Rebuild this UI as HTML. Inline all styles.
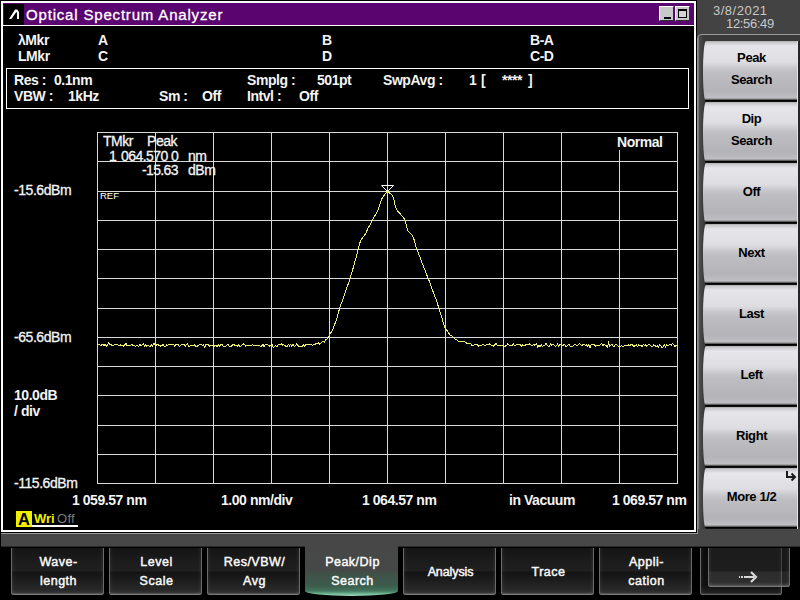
<!DOCTYPE html>
<html><head><meta charset="utf-8">
<style>
*{margin:0;padding:0;box-sizing:border-box}
html,body{width:800px;height:600px;overflow:hidden;background:#000}
body{position:relative;font-family:"Liberation Sans",sans-serif;}
.a{position:absolute;white-space:pre}
.w{color:#f4f4f4;font-size:14px;font-weight:bold;line-height:15px;letter-spacing:-0.45px}
.r{color:#f4f4f4;font-size:14px;line-height:15px;letter-spacing:-0.45px;-webkit-text-stroke:0.3px #f4f4f4}
#main{position:absolute;left:1px;top:1px;width:695px;height:531px;border:2px solid #fff;background:#000}
#title{position:absolute;left:3px;top:3px;width:691px;height:22px;background:#5a046f}
#logo{position:absolute;left:4px;top:4px;width:20px;height:21px;background:#000}
#tline{position:absolute;left:3px;top:25px;width:691px;height:1px;background:#fff}
#gbar{position:absolute;left:1px;top:533px;width:799px;height:14px;background:#474747;border-bottom:1px solid #2a2a2a}
#rpanel{position:absolute;left:697px;top:0;width:103px;height:547px;background:#434343}
.sk{position:absolute;left:703px;width:95px;height:61px;
 border-radius:3px 0 0 3px / 30px 0 0 30px;
 background:linear-gradient(#a0a0a2 0px,#c8c8ca 1px,#d6d6da 3px,#e6e6ea 5px,#dedee2 21px,#c6c6ca 28px,#bebec2 32px,#b4b4b8 50px,#bababe 54px,#c0c0c4 57px,#606060 58.5px,#000 59.5px,#111 60.5px,#444 61px);
 box-shadow: inset -1px 0 0 #e4e4e4;
 color:#000;font-weight:bold;font-size:13px;text-align:center;line-height:22px;letter-spacing:-0.4px}
.sk div{padding-left:2px}
.bt{position:absolute;top:548px;width:93px;height:47px;border-radius:0 0 3px 3px;
 background:linear-gradient(#141414,#1a1a1a 10px,#202020 23px,#131313 24px,#1c1c1c 32px,#2a2a2a 43px,#3a3a3a 45px,#7a7a7a 46.5px,#444 47px);
 box-shadow: inset 1px 0 0 #6a6a6a, inset -1px 0 0 #6a6a6a, inset 4px 0 4px -3px rgba(255,255,255,.12), inset -4px 0 4px -3px rgba(255,255,255,.12);
 color:#fafafa;font-size:12.5px;-webkit-text-stroke:0.45px #fafafa;text-align:center;line-height:19px;padding-top:5px;letter-spacing:0.5px;padding-left:2px}
.win{position:absolute;top:6px;width:15px;height:15px;background:#c8c8c8;border-top:1px solid #fff;border-left:1px solid #fff;border-right:1px solid #303030;border-bottom:1px solid #303030}
</style></head><body>
<div id="main"></div>
<div id="title"></div>
<div id="logo"></div>
<div id="tline"></div>
<svg class="a" style="left:0;top:0" width="800" height="600">
<path d="M9,19 L15,9.5 L17.2,9.5 L19,12 L19,19 L17,19 L17,12.8 L16.3,12 L11.4,19 Z" fill="#fff"/>
</svg>
<div class="a" style="left:26px;top:6px;color:#fff;font-size:15px;line-height:18px;letter-spacing:0.82px;-webkit-text-stroke:0.3px #fff">Optical Spectrum Analyzer</div>
<div class="win" style="left:659px"><div style="position:absolute;left:4px;top:10px;width:7px;height:2px;background:#000"></div></div>
<div class="win" style="left:675px"><div style="position:absolute;left:2px;top:2px;width:9px;height:9px;border:1px solid #000;border-top-width:2px;background:#d4d4d4"></div></div>

<div class="a w" style="left:18px;top:33px">&#955;Mkr</div>
<div class="a w" style="left:18px;top:49px">LMkr</div>
<div class="a w" style="left:98px;top:33px">A</div>
<div class="a w" style="left:98px;top:49px">C</div>
<div class="a w" style="left:322px;top:33px">B</div>
<div class="a w" style="left:322px;top:49px">D</div>
<div class="a w" style="left:530px;top:33px">B-A</div>
<div class="a w" style="left:530px;top:49px">C-D</div>

<div class="a" style="left:6px;top:68px;width:683px;height:41px;border:1px solid #fff"></div>
<div class="a w" style="left:14px;top:73px">Res :</div>
<div class="a w" style="left:54px;top:73px">0.1nm</div>
<div class="a w" style="left:14px;top:89px">VBW :</div>
<div class="a w" style="left:68px;top:89px">1kHz</div>
<div class="a w" style="left:159px;top:89px">Sm :</div>
<div class="a w" style="left:202px;top:89px">Off</div>
<div class="a w" style="left:247px;top:73px">Smplg :</div>
<div class="a w" style="left:317px;top:73px">501pt</div>
<div class="a w" style="left:247px;top:89px">Intvl :</div>
<div class="a w" style="left:299px;top:89px">Off</div>
<div class="a w" style="left:383px;top:73px">SwpAvg :</div>
<div class="a w" style="left:469px;top:73px">1</div>
<div class="a w" style="left:481px;top:73px">[</div>
<div class="a w" style="left:502px;top:73px">****</div>
<div class="a w" style="left:528px;top:73px">]</div>

<svg class="a" style="left:0;top:0" width="800" height="600">
<g stroke="#d8d8d8" stroke-width="1" shape-rendering="crispEdges"><line x1="97" y1="132.5" x2="678" y2="132.5"/><line x1="97" y1="161.5" x2="678" y2="161.5"/><line x1="97" y1="191.5" x2="678" y2="191.5"/><line x1="97" y1="220.5" x2="678" y2="220.5"/><line x1="97" y1="249.5" x2="678" y2="249.5"/><line x1="97" y1="278.5" x2="678" y2="278.5"/><line x1="97" y1="308.5" x2="678" y2="308.5"/><line x1="97" y1="337.5" x2="678" y2="337.5"/><line x1="97" y1="366.5" x2="678" y2="366.5"/><line x1="97" y1="395.5" x2="678" y2="395.5"/><line x1="97" y1="425.5" x2="678" y2="425.5"/><line x1="97" y1="454.5" x2="678" y2="454.5"/><line x1="97" y1="483.5" x2="678" y2="483.5"/><line x1="97.5" y1="132" x2="97.5" y2="484"/><line x1="155.5" y1="132" x2="155.5" y2="484"/><line x1="213.5" y1="132" x2="213.5" y2="484"/><line x1="271.5" y1="132" x2="271.5" y2="484"/><line x1="329.5" y1="132" x2="329.5" y2="484"/><line x1="387.5" y1="132" x2="387.5" y2="484"/><line x1="445.5" y1="132" x2="445.5" y2="484"/><line x1="503.5" y1="132" x2="503.5" y2="484"/><line x1="561.5" y1="132" x2="561.5" y2="484"/><line x1="619.5" y1="132" x2="619.5" y2="484"/><line x1="677.5" y1="132" x2="677.5" y2="484"/></g>
<path d="M97.0,344.3 L98.2,344.1 L99.3,344.9 L100.5,345.2 L101.6,345.0 L102.8,344.1 L104.0,346.0 L105.1,344.5 L106.3,346.4 L107.4,344.9 L108.6,342.8 L109.8,344.1 L110.9,344.2 L112.1,346.0 L113.2,345.4 L114.4,344.9 L115.6,344.1 L116.7,344.4 L117.9,345.0 L119.0,345.4 L120.2,344.7 L121.4,345.7 L122.5,345.4 L123.7,346.2 L124.8,344.6 L126.0,343.2 L127.2,345.9 L128.3,345.2 L129.5,345.6 L130.6,345.4 L131.8,344.2 L133.0,345.4 L134.1,345.1 L135.3,346.4 L136.4,345.6 L137.6,345.7 L138.8,346.5 L139.9,344.6 L141.1,345.6 L142.2,345.1 L143.4,344.2 L144.6,345.9 L145.7,344.5 L146.9,346.2 L148.0,345.1 L149.2,346.2 L150.4,346.1 L151.5,345.0 L152.7,346.2 L153.8,343.4 L155.0,344.5 L156.2,345.2 L157.3,344.6 L158.5,345.0 L159.6,345.4 L160.8,346.2 L162.0,345.5 L163.1,344.0 L164.3,346.7 L165.4,346.7 L166.6,344.9 L167.8,345.5 L168.9,344.1 L170.1,344.3 L171.2,344.0 L172.4,344.3 L173.6,344.8 L174.7,346.2 L175.9,344.3 L177.0,344.8 L178.2,344.2 L179.4,346.5 L180.5,345.2 L181.7,344.2 L182.8,344.6 L184.0,344.3 L185.2,346.4 L186.3,344.3 L187.5,344.0 L188.6,346.4 L189.8,346.2 L191.0,344.9 L192.1,345.9 L193.3,345.9 L194.4,344.5 L195.6,346.5 L196.8,346.8 L197.9,345.8 L199.1,345.2 L200.2,344.0 L201.4,344.6 L202.6,345.7 L203.7,344.9 L204.9,347.7 L206.0,344.5 L207.2,344.5 L208.4,344.4 L209.5,346.2 L210.7,345.1 L211.8,346.0 L213.0,345.6 L214.2,346.7 L215.3,345.1 L216.5,346.0 L217.6,346.0 L218.8,344.7 L220.0,346.4 L221.1,344.3 L222.3,344.3 L223.4,346.8 L224.6,346.0 L225.8,346.0 L226.9,345.3 L228.1,343.9 L229.2,346.0 L230.4,346.3 L231.6,346.2 L232.7,344.4 L233.9,344.7 L235.0,345.4 L236.2,345.0 L237.4,346.3 L238.5,345.1 L239.7,346.3 L240.8,346.3 L242.0,345.3 L243.2,343.9 L244.3,344.4 L245.5,346.0 L246.6,345.1 L247.8,345.3 L249.0,345.2 L250.1,345.9 L251.3,345.4 L252.4,344.6 L253.6,345.2 L254.8,345.9 L255.9,344.9 L257.1,345.2 L258.2,345.7 L259.4,345.3 L260.6,346.3 L261.7,346.2 L262.9,343.9 L264.0,346.4 L265.2,344.3 L266.4,345.0 L267.5,344.5 L268.7,345.6 L269.8,346.2 L271.0,345.8 L272.2,344.3 L273.3,347.6 L274.5,346.4 L275.6,345.2 L276.8,346.9 L278.0,345.0 L279.1,344.8 L280.3,344.7 L281.4,344.0 L282.6,345.0 L283.8,344.8 L284.9,345.2 L286.1,346.5 L287.2,346.4 L288.4,344.6 L289.6,345.9 L290.7,344.2 L291.9,346.3 L293.0,344.6 L294.2,346.3 L295.4,345.7 L296.5,344.0 L297.7,345.0 L298.8,346.3 L300.0,346.0 L301.2,346.1 L302.3,346.1 L303.5,344.8 L304.6,346.3 L305.8,344.2 L307.0,344.5 L308.1,344.3 L309.3,344.4 L310.4,344.7 L311.6,344.7 L312.8,345.3 L313.9,344.4 L315.1,344.4 L316.2,343.5 L317.4,343.7 L318.6,342.9 L319.7,344.0 L320.9,343.2 L322.0,341.9 L323.2,341.8 L324.4,342.2 L325.5,339.6 L326.7,339.5 L327.8,337.3 L329.0,336.0 L330.2,334.0 L331.3,331.9 L332.5,329.9 L333.6,327.2 L334.8,324.1 L336.0,320.9 L337.1,317.6 L338.3,313.3 L339.4,309.1 L340.6,305.4 L341.8,302.3 L342.9,299.2 L344.1,295.8 L345.2,292.3 L346.4,288.9 L347.6,285.7 L348.7,282.5 L349.9,279.3 L351.0,275.4 L352.2,271.3 L353.4,267.2 L354.5,263.2 L355.7,259.1 L356.8,254.6 L358.0,250.0 L359.2,245.4 L360.3,241.4 L361.5,239.4 L362.6,237.6 L363.8,236.0 L365.0,234.4 L366.1,232.7 L367.3,229.8 L368.4,227.3 L369.6,225.6 L370.8,223.3 L371.9,220.7 L373.1,218.6 L374.2,216.6 L375.4,214.9 L376.6,213.2 L377.7,210.7 L378.9,207.4 L380.0,203.9 L381.2,200.4 L382.4,197.5 L383.5,196.1 L384.7,194.6 L385.8,193.1 L387.0,191.6 L388.2,191.6 L389.3,192.7 L390.5,193.7 L391.6,194.8 L392.8,195.8 L394.0,200.3 L395.1,205.3 L396.3,208.5 L397.4,211.0 L398.6,212.2 L399.8,213.4 L400.9,214.6 L402.1,215.9 L403.2,217.2 L404.4,219.2 L405.6,222.7 L406.7,226.5 L407.9,230.6 L409.0,232.0 L410.2,233.2 L411.4,234.4 L412.5,236.0 L413.7,238.4 L414.8,242.4 L416.0,247.0 L417.2,249.9 L418.3,252.9 L419.5,255.9 L420.6,259.0 L421.8,262.1 L423.0,265.0 L424.1,268.0 L425.3,271.0 L426.4,274.0 L427.6,277.0 L428.8,280.0 L429.9,283.1 L431.1,286.2 L432.2,289.3 L433.4,292.4 L434.6,295.5 L435.7,298.6 L436.9,301.7 L438.0,305.4 L439.2,309.1 L440.4,312.8 L441.5,316.6 L442.7,320.6 L443.8,324.7 L445.0,327.7 L446.2,329.4 L447.3,331.1 L448.5,332.7 L449.6,334.4 L450.8,336.0 L452.0,335.9 L453.1,337.0 L454.3,338.2 L455.4,339.6 L456.6,339.2 L457.8,341.0 L458.9,341.2 L460.1,341.5 L461.2,341.4 L462.4,341.7 L463.6,341.5 L464.7,342.0 L465.9,342.3 L467.0,344.0 L468.2,343.2 L469.4,343.3 L470.5,343.3 L471.7,345.1 L472.8,345.3 L474.0,345.2 L475.2,344.3 L476.3,344.9 L477.5,344.9 L478.6,346.2 L479.8,345.3 L481.0,346.2 L482.1,344.7 L483.3,344.7 L484.4,345.0 L485.6,345.1 L486.8,344.4 L487.9,344.8 L489.1,343.8 L490.2,344.4 L491.4,345.1 L492.6,345.5 L493.7,346.1 L494.9,344.6 L496.0,343.3 L497.2,345.5 L498.4,346.0 L499.5,345.8 L500.7,345.9 L501.8,345.2 L503.0,346.0 L504.2,346.0 L505.3,346.1 L506.5,345.6 L507.6,343.9 L508.8,344.8 L510.0,346.0 L511.1,345.5 L512.3,345.6 L513.4,343.9 L514.6,345.8 L515.8,345.3 L516.9,344.0 L518.1,344.5 L519.2,344.6 L520.4,344.4 L521.6,346.4 L522.7,344.9 L523.9,345.7 L525.0,345.5 L526.2,344.1 L527.4,344.6 L528.5,344.7 L529.7,343.9 L530.8,344.6 L532.0,345.7 L533.2,344.7 L534.3,345.1 L535.5,344.2 L536.6,343.7 L537.8,347.5 L539.0,345.1 L540.1,346.5 L541.3,344.7 L542.4,346.4 L543.6,345.5 L544.8,345.3 L545.9,343.4 L547.1,345.3 L548.2,346.3 L549.4,346.3 L550.6,344.1 L551.7,345.3 L552.9,344.8 L554.0,344.9 L555.2,346.2 L556.4,346.0 L557.5,344.3 L558.7,346.4 L559.8,344.2 L561.0,345.1 L562.2,345.8 L563.3,345.2 L564.5,344.2 L565.6,346.2 L566.8,346.5 L568.0,344.8 L569.1,344.6 L570.3,346.6 L571.4,347.0 L572.6,346.5 L573.8,345.6 L574.9,344.2 L576.1,345.3 L577.2,345.8 L578.4,344.2 L579.6,343.5 L580.7,345.0 L581.9,346.0 L583.0,344.2 L584.2,344.9 L585.4,345.2 L586.5,344.6 L587.7,346.5 L588.8,344.7 L590.0,348.0 L591.2,344.5 L592.3,344.4 L593.5,344.4 L594.6,344.8 L595.8,346.5 L597.0,345.3 L598.1,345.6 L599.3,345.1 L600.4,344.9 L601.6,343.6 L602.8,345.8 L603.9,344.0 L605.1,344.9 L606.2,345.4 L607.4,347.3 L608.6,343.0 L609.7,346.1 L610.9,345.4 L612.0,344.2 L613.2,346.7 L614.4,346.5 L615.5,344.2 L616.7,344.7 L617.8,346.0 L619.0,346.7 L620.2,346.3 L621.3,345.7 L622.5,346.3 L623.6,346.7 L624.8,345.1 L626.0,345.0 L627.1,346.1 L628.3,344.5 L629.4,345.8 L630.6,344.9 L631.8,344.3 L632.9,345.5 L634.1,346.4 L635.2,345.5 L636.4,345.0 L637.6,346.7 L638.7,344.4 L639.9,346.1 L641.0,345.0 L642.2,346.8 L643.4,344.5 L644.5,345.5 L645.7,344.9 L646.8,346.3 L648.0,344.9 L649.2,344.7 L650.3,345.0 L651.5,346.4 L652.6,346.9 L653.8,344.9 L655.0,345.5 L656.1,346.9 L657.3,345.4 L658.4,347.0 L659.6,344.6 L660.8,345.5 L661.9,347.7 L663.1,347.0 L664.2,344.9 L665.4,346.9 L666.6,344.5 L667.7,345.4 L668.9,345.3 L670.0,344.5 L671.2,345.4 L672.4,343.8 L673.5,344.3 L674.7,346.6 L675.8,345.6 L677.0,345.7" fill="none" stroke="#ecec78" stroke-width="1" shape-rendering="crispEdges"/>
<path d="M381.5,185.5 L393.5,185.5 L387.5,191.5 Z" fill="none" stroke="#fff" stroke-width="1"/>
</svg>

<div class="a r" style="left:103px;top:134px">TMkr</div>
<div class="a r" style="left:147px;top:134px">Peak</div>
<div class="a r" style="left:109px;top:149px">1</div>
<div class="a r" style="left:121px;top:149px;letter-spacing:-0.55px">064.570</div>
<div class="a r" style="left:171px;top:149px">0</div>
<div class="a r" style="left:188px;top:149px">nm</div>
<div class="a r" style="left:142px;top:163px;letter-spacing:-0.65px">-15.63</div>
<div class="a r" style="left:188px;top:163px">dBm</div>
<div class="a" style="left:100px;top:190px;color:#fff;font-size:9.5px">REF</div>
<div class="a" style="left:615px;top:133px;width:48px;height:17px;background:#000"></div><div class="a w" style="left:617px;top:135px">Normal</div>

<div class="a r" style="left:14px;top:183px">-15.6dBm</div>
<div class="a r" style="left:14px;top:330px">-65.6dBm</div>
<div class="a w" style="left:14px;top:388px">10.0dB</div>
<div class="a w" style="left:14px;top:404px">/ div</div>
<div class="a r" style="left:14px;top:476px">-115.6dBm</div>

<div class="a w" style="left:72px;top:493px">1 059.57 nm</div>
<div class="a w" style="left:221px;top:493px">1.00 nm/div</div>
<div class="a w" style="left:362px;top:493px">1 064.57 nm</div>
<div class="a w" style="left:509px;top:493px">in Vacuum</div>
<div class="a w" style="left:612px;top:493px">1 069.57 nm</div>

<div class="a" style="left:16px;top:511px;width:16px;height:16px;background:#f0f000;color:#000;font-weight:bold;font-size:16.5px;line-height:17px;text-align:center">A</div>
<div class="a" style="left:34px;top:510px;color:#f0f000;font-weight:bold;font-size:13px;line-height:17px">Wri</div>
<div class="a" style="left:57px;top:510px;color:#7a7a7a;font-size:13px;line-height:17px;letter-spacing:0.3px">Off</div>
<div class="a" style="left:32px;top:525px;width:46px;height:2px;background:#fff"></div>

<div id="rpanel"></div>
<div class="a" style="left:713px;top:3px;color:#c8c8c8;font-size:13px;line-height:15px;letter-spacing:0.5px">3/8/2021</div>
<div class="a" style="left:726px;top:16px;color:#c8c8c8;font-size:13px;line-height:15px;letter-spacing:-0.35px">12:56:49</div>
<div class="a" style="left:697px;top:34px;width:110px;height:499px;border-radius:5px 0 0 0;border-top:1px solid #9a9a9a;background:linear-gradient(to right,#999 0,#707070 2px,#505050 2px,#3c3c3c 6px,#3a3a3a 8px)"></div>

<div class="sk" style="top:41px"><div style="padding-top:6px">Peak<br>Search</div></div>
<div class="sk" style="top:102px"><div style="padding-top:6px">Dip<br>Search</div></div>
<div class="sk" style="top:163px"><div style="padding-top:18px">Off</div></div>
<div class="sk" style="top:224px"><div style="padding-top:18px">Next</div></div>
<div class="sk" style="top:285px"><div style="padding-top:18px">Last</div></div>
<div class="sk" style="top:346px"><div style="padding-top:18px">Left</div></div>
<div class="sk" style="top:407px"><div style="padding-top:18px">Right</div></div>
<div class="sk" style="top:468px"><div style="padding-top:18px">More 1/2</div></div>
<div id="gbar"></div><div class="a" style="left:1px;top:533px;width:697px;height:1px;background:#999"></div><div class="a" style="left:698px;top:529px;width:102px;height:4px;background:#474747"></div>
<div class="a" style="left:798px;top:41px;width:2px;height:486px;background:#262626"></div>

<div class="bt" style="left:11px">Wave-<br>length</div>
<div class="bt" style="left:109px">Level<br>Scale</div>
<div class="bt" style="left:207px">Res/VBW/<br>Avg</div>
<div class="bt" style="left:305px;top:546px;height:50px;padding-top:7px;z-index:2;box-shadow:none;border-radius:0 0 46px 46px / 0 0 5px 5px;background:linear-gradient(#474747,#464847 24px,#405048 27px,#3c5c4c 40px,#43765e 45px,#74bc9a 48px,#a0dcc0 50px)">Peak/Dip<br>Search</div>
<div class="bt" style="left:403px;padding-top:15px;letter-spacing:-0.1px">Analysis</div>
<div class="bt" style="left:501px;padding-top:15px">Trace</div>
<div class="bt" style="left:599px">Appli-<br>cation</div>
<div class="bt" style="left:700px;width:82px;background:linear-gradient(#0a0a0a,#111 38px,#222 45px,#777 47px)"></div>
<div class="bt" style="left:708px;width:82px;height:39px;background:linear-gradient(rgba(40,40,40,.6),rgba(40,40,40,.6) 23px,rgba(70,70,70,.55) 24px,rgba(70,70,70,.55) 34px,rgba(90,90,90,.7) 37px,#888 39px)"></div>
<svg class="a" style="left:0;top:0;z-index:3" width="800" height="600">
<g fill="#d8d8d8"><rect x="739" y="576" width="1" height="2"/><rect x="741" y="576" width="2" height="2"/><rect x="744" y="576" width="10" height="2"/></g>
<path d="M751,572 L756,577 L751,582" fill="none" stroke="#d8d8d8" stroke-width="2.2"/>
<path d="M787,471 L787,477 L794,477 M791.5,473.5 L795,477 L791.5,480.5" fill="none" stroke="#1a1a1a" stroke-width="2"/>
</svg>
</body></html>
